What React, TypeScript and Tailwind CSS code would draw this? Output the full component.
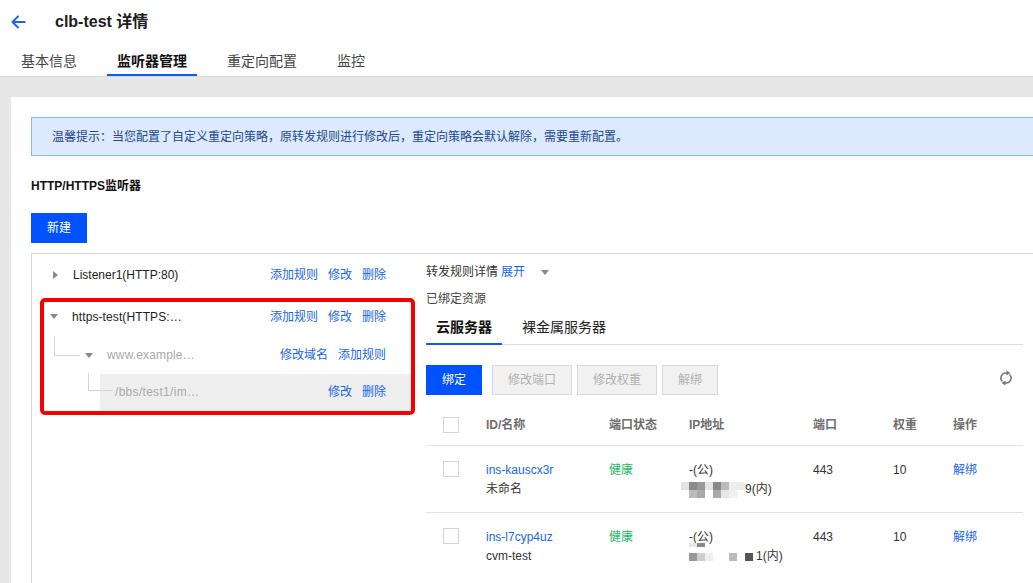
const font = { fontFamily: '"Liberation Sans","Noto Sans CJK SC",sans-serif' };

function Caret({ down, className = "" }: { down?: boolean; className?: string }) {
  return down ? (
    <span className={`inline-block w-0 h-0 border-x-[4px] border-x-transparent border-t-[5px] border-t-[#888] ${className}`} />
  ) : (
    <span className={`inline-block w-0 h-0 border-y-[4px] border-y-transparent border-l-[5px] border-l-[#888] ${className}`} />
  );
}

function Links({ items }: { items: string[] }) {
  return (
    <div className="flex gap-[10px] text-[#1a66e6] text-[12px]">
      {items.map((t, i) => (
        <span key={i}>{t}</span>
      ))}
    </div>
  );
}

function Check() {
  return <span className="block w-4 h-4 border border-[#d4d4d4] bg-white" />;
}

const cols = "grid grid-cols-[43px_123px_80px_124px_80px_60px_1fr] pl-[17px]";

function Mosaic({ rows }: { rows: string[][] }) {
  return (
    <span className="flex flex-col shrink-0">
      {rows.map((cells, r) => (
        <span key={r} className="flex">
          {cells.map((c, i) => (
            <span key={i} className="block w-2 h-2" style={{ background: c }} />
          ))}
        </span>
      ))}
    </span>
  );
}

function Row({ id, name, rows, tail, smudge }: { id: string; name: string; rows: string[][]; tail: string; smudge?: boolean }) {
  return (
    <div className={`${cols} h-[67px] pt-[15px] text-[12px] leading-[19px] text-[#333] border-t border-[#e2e2e2]`}>
      <div>
        <Check />
      </div>
      <div>
        <div className="text-[#1a66e6]">{id}</div>
        <div>{name}</div>
      </div>
      <div className="text-[#29b765]">健康</div>
      <div className="relative -ml-2">
        <div className="pl-2">-(公)</div>
        {smudge && (
          <span className="absolute left-2 top-[15px] flex">
            <span className="block w-2 h-1 bg-[#e6e6e6]" />
            <span className="block w-2 h-1 bg-[#8a8a8a]" />
          </span>
        )}
        <div className="flex items-center h-[19px]">
          <Mosaic rows={rows} />
          <span className={smudge ? "ml-[3px]" : ""}>{tail}</span>
        </div>
      </div>
      <div>443</div>
      <div>10</div>
      <div className="text-[#1a66e6]">解绑</div>
    </div>
  );
}

export default function App() {
  return (
    <div style={font} className="w-[1033px] h-[583px] overflow-hidden bg-[#e7e7e7] flex flex-col text-[12px] text-[#222]">
      <header className="h-[77px] bg-white border-b border-[#d8d8d8] shrink-0 flex flex-col">
        <div className="h-[43px] flex items-center pl-[11px] pt-[1px]">
          <svg width="15" height="14" viewBox="0 0 15 14" fill="none" stroke="#1a66e6" strokeWidth="2">
            <path d="M14.5 7H1.5M7.5 1 1.5 7l6 6" />
          </svg>
          <span className="ml-[29px] text-[16px] font-bold text-[#1c1c1c]">clb-test 详情</span>
        </div>
        <nav className="flex text-[14px] text-[#444] h-[33px] pl-[21px]">
          <span className="pt-[9px] leading-[18px] mr-[30px]">基本信息</span>
          <span className="pt-[9px] leading-[18px] w-[90px] text-center mr-[30px] font-bold text-[#111] border-b-2 border-[#0f5ce8]">监听器管理</span>
          <span className="pt-[9px] leading-[18px] mr-[40px]">重定向配置</span>
          <span className="pt-[9px] leading-[18px]">监控</span>
        </nav>
      </header>

      <main className="ml-[11px] mt-5 flex-1 bg-white pt-5 pl-5 min-h-0">
        <div className="h-[39px] bg-[#dde9fc] border border-r-0 border-[#8db6f2] flex items-center pl-5 text-[#23488f] whitespace-nowrap overflow-hidden">
          温馨提示：当您配置了自定义重定向策略，原转发规则进行修改后，重定向策略会默认解除，需要重新配置。
        </div>
        <h2 className="mt-[22px] font-bold text-[12px] leading-[16px] text-[#111]">HTTP/HTTPS监听器</h2>
        <button className="block mt-[19px] w-14 h-[30px] bg-[#0052ff] text-white text-[12px]">新建</button>

        <div className="mt-[10px] border-t border-l border-[#d4d4d4] flex h-[400px]">
          {/* tree */}
          <div className="w-[394px] shrink-0 pl-[8px]">
            <div className="h-[41px] flex items-center pr-[40px] pl-[13px]">
              <Caret />
              <span className="ml-[15px] text-[#222]">Listener1(HTTP:80)</span>
              <span className="ml-auto">
                <Links items={["添加规则", "修改", "删除"]} />
              </span>
            </div>
            <div className="mt-[3px] w-[375px] h-[117px] border-[4px] border-[#f50000] rounded-[5px]">
              <div className="h-[29px] flex items-center pl-[6px] pr-[25px]">
                <Caret down />
                <span className="ml-[14px] text-[#222] tracking-[0.1px]">https-test(HTTPS:…</span>
                <span className="ml-auto">
                  <Links items={["添加规则", "修改", "删除"]} />
                </span>
              </div>
              <div className="relative mt-[6px] h-[36px] flex items-center pl-[41px] pr-[25px]">
                <span className="absolute left-[10px] top-0 w-[26px] h-[19px] border-l border-b border-[#d4d4d4]" />
                <Caret down />
                <span className="ml-[14px] text-[#aaa] tracking-[0.15px]">www.example…</span>
                <span className="ml-auto">
                  <Links items={["修改域名", "添加规则"]} />
                </span>
              </div>
              <div className="relative ml-[56px] mt-[1px] h-[37px] pb-[2px] bg-[#eeeeee] flex items-center pl-[15px] pr-[25px]">
                <span className="absolute left-[-12px] top-[-1px] w-[25px] h-[18px] border-l border-b border-[#d4d4d4]" />
                <span className="text-[#aaa] tracking-[0.3px]">/bbs/test1/im…</span>
                <span className="ml-auto">
                  <Links items={["修改", "删除"]} />
                </span>
              </div>
            </div>
          </div>

          {/* detail */}
          <div className="flex-1 pr-[10px] min-w-0">
            <div className="mt-[9px] h-[18px] flex items-center text-[#333]">
              转发规则详情<span className="ml-[3px] text-[#1a66e6]">展开</span>
              <Caret down className="ml-[16px] mt-[1px]" />
            </div>
            <div className="mt-[9px] h-[18px] flex items-center text-[#444]">已绑定资源</div>

            <div className="h-[37px] flex border-b border-[#dcdcdc] text-[14px]">
              <span className="w-[76px] h-[37px] pt-[10px] leading-[18px] text-center font-bold text-[#111] border-b-2 border-[#0f5ce8]">云服务器</span>
              <span className="ml-[20px] pt-[10px] leading-[18px] text-[#222]">裸金属服务器</span>
            </div>

            <div className="mt-[20px] flex items-center">
              <button className="w-14 h-[30px] bg-[#0052ff] text-white text-[12px]">绑定</button>
              <button className="ml-[10px] w-20 h-[30px] bg-[#f1f1f1] border border-[#d9d9d9] text-[#b0b0b0] text-[12px]">修改端口</button>
              <button className="ml-[5px] w-20 h-[30px] bg-[#f1f1f1] border border-[#d9d9d9] text-[#b0b0b0] text-[12px]">修改权重</button>
              <button className="ml-[5px] w-14 h-[30px] bg-[#f1f1f1] border border-[#d9d9d9] text-[#b0b0b0] text-[12px]">解绑</button>
              <svg className="ml-auto mr-[11px] -mt-1" width="12" height="16" viewBox="0 0 12 16" fill="none" stroke="#777" strokeWidth="1.6">
                <path d="M2.4 11.5A5 5 0 0 1 7 3.1" />
                <path d="M9.6 4.5A5 5 0 0 1 5 12.9" />
                <path d="M6.5 0.5v5l4-2.5z" fill="#777" stroke="none" />
                <path d="M5.5 10.5v5l-4-2.5z" fill="#777" stroke="none" />
              </svg>
            </div>

            <div className={`${cols} mt-[10px] h-[40px] items-center font-bold text-[#6e6e6e]`}>
              <Check />
              <span>ID/名称</span>
              <span>端口状态</span>
              <span>IP地址</span>
              <span>端口</span>
              <span>权重</span>
              <span>操作</span>
            </div>
            <Row
              id="ins-kauscx3r"
              name="未命名"
              rows={[
                ["#e4e4e4", "#8a8a8a", "#999999", "#e4e4e4", "#888888", "#bbbbbb", "#eeeeee", "#ececec"],
                ["#ffffff", "#bbbbbb", "#aaaaaa", "#ffffff", "#aaaaaa", "#e6e6e6", "#f0f0f0", "#ffffff"],
              ]}
              tail="9(内)"
            />
            <Row
              id="ins-l7cyp4uz"
              name="cvm-test"
              smudge
              rows={[["#ffffff", "#999999", "#cfcfcf", "#eeeeee", "#ffffff", "#ffffff", "#bbbbbb", "#ffffff", "#555555"]]}
              tail="1(内)"
            />
          </div>
        </div>
      </main>
    </div>
  );
}
